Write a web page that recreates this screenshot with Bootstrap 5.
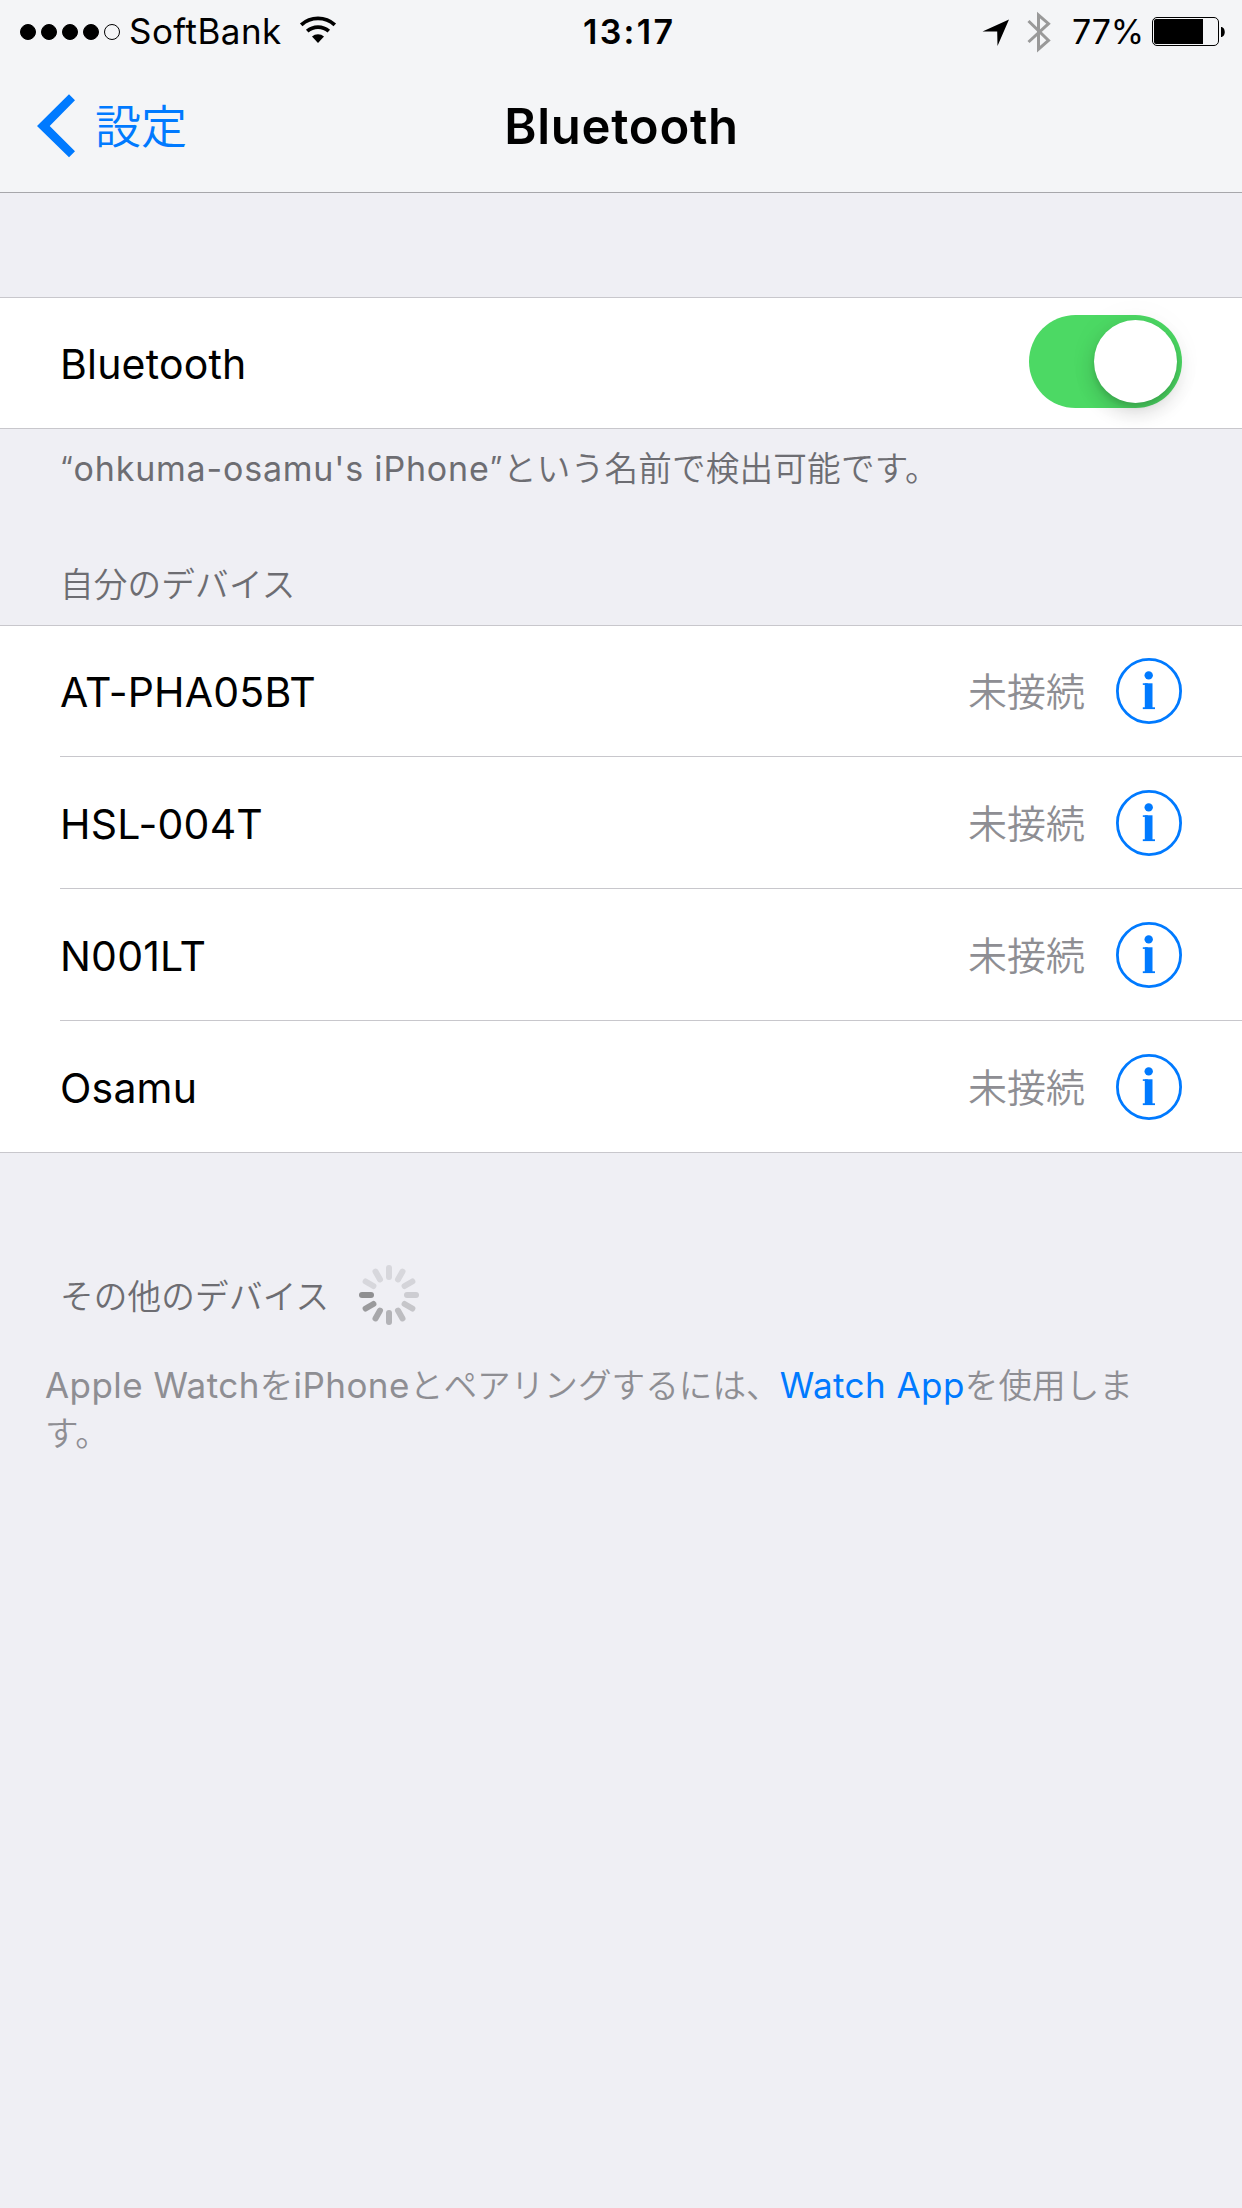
<!DOCTYPE html>
<html lang="ja">
<head>
<meta charset="utf-8">
<meta name="viewport" content="width=device-width, initial-scale=1">
<title>Bluetooth</title>
<link href="https://cdn.jsdelivr.net/npm/bootstrap@5.3.0/dist/css/bootstrap.min.css" rel="stylesheet">
<style>
:root{--ios-blue:#007aff;--ios-line:#c8c7cc;--ios-grey:#6d6d72;--ios-light:#8e8e93}
body{font-family:Inter,"Noto Sans CJK JP",sans-serif;background:#efeff4;color:#000;line-height:1;min-height:2208px}
svg{display:block;flex:none}
.jp{font-family:"Noto Sans CJK JP",sans-serif;font-weight:350}
.top-area{height:193px;background:#f4f5f7;border-bottom:1px solid #a7a7ab}
.status-bar{height:60px;padding:3px 17px 0 20px;font-size:34px}
.status-left{width:563px}
.carrier{font-size:35px;letter-spacing:.45px;margin-left:9px}
.wifi{margin:-3px 0 0 17px}
.signal-dots{gap:5px}
.signal-dots i{width:16px;height:16px;border:1px solid #000;border-radius:50%}
.signal-dots .on{background:#000}
.clock{font-weight:600;letter-spacing:2.3px}
.percent{letter-spacing:-.2px}
.title-bar{height:132px;padding:0 37px}
.side{flex:1 1 0}
.back-link{color:var(--ios-blue);text-decoration:none;padding-top:1px}
.back-link .jp{font-size:46px;margin:0 0 6px 20px}
.page-title{font-size:49px;font-weight:600;letter-spacing:.75px;margin:0 0 0 1px;line-height:1}
.ios-list{--bs-list-group-border-color:var(--ios-line);border:solid var(--ios-line);border-width:1px 0;border-radius:0;background:#fff}
.ios-list .list-group-item{border:0;background:none;color:#000;padding:0 0 0 60px;line-height:1}
.row-body{height:131px;padding:1px 60px 0 0;font-size:41px}
.list-group-item:not(:last-child) .row-body{border-bottom:1px solid var(--ios-line);height:132px}
.ios-list .list-group-item:first-child:not(:last-child) .row-body{height:131px;padding-top:0}
.row-label{padding-top:2px;letter-spacing:.2px}
.first-list{margin-top:104px}
.first-list .row-body{height:130px;padding-top:0}
.toggle{width:153px;height:93px;border-radius:47px;background:#4cd964;margin:0 0 3px;padding:5px;display:flex;justify-content:flex-end}
.toggle span{width:83px;height:83px;border-radius:50%;background:#fff;box-shadow:0 9px 20px rgba(0,0,0,.16),0 4px 5px rgba(0,0,0,.1),0 0 36px rgba(0,0,0,.04)}
.state{color:var(--ios-light);font-size:39px;padding-bottom:3px;margin-right:31px}
.note,.section-head{color:var(--ios-grey);padding-left:60px}
.note{height:80px;font-size:34px;letter-spacing:.8px;white-space:nowrap;padding-bottom:2px}
.quote{font-size:29px;vertical-align:4px;line-height:1}
.note .jp,.section-head .jp{font-size:33.6px;letter-spacing:.2px}
.head-mine{height:84px;margin-top:32px}
.head-other{height:60px;margin-top:112px;gap:30px}
.watch-note{color:var(--ios-light);font-size:35px;line-height:48px;letter-spacing:.45px;margin:36px 0 0;padding:0 92px 0 45px}
.watch-note .jp{font-size:33.6px;letter-spacing:.05px;line-height:1}
.watch-note a{color:var(--ios-blue);text-decoration:none}
</style>
</head>
<body>
<header class="top-area">
  <div class="status-bar d-flex align-items-center">
    <div class="status-left d-flex align-items-center">
      <div class="signal-dots d-flex"><i class="on"></i><i class="on"></i><i class="on"></i><i class="on"></i><i></i></div>
      <span class="carrier">SoftBank</span>
      <svg class="wifi" width="38" height="28" viewBox="0 0 38 28" fill="none" stroke="#000" stroke-width="3.8"><path d="M2.2 8.8a25 25 0 0 1 33.6 0M8.2 15.2a16.2 16.2 0 0 1 21.6 0"/><path d="M13 20.6a9 9 0 0 1 12 0L19 27z" fill="#000" stroke="none"/></svg>
    </div>
    <span class="clock">13:17</span>
    <div class="d-flex align-items-center ms-auto">
      <svg class="me-3" width="28" height="28" viewBox="0 0 28 28"><path d="M.5 13.5 27 1.5 15.5 28l-.3-14.5z"/></svg>
      <svg class="me-3" width="26" height="42" viewBox="0 0 26 42" fill="none" stroke="#999" stroke-width="3"><path d="M2.5 10 22.5 29.5 12.5 38.2V4l10 8.7L2.5 31"/></svg>
      <span class="percent ms-1">77%</span>
      <svg class="ms-2" width="73" height="29" viewBox="0 0 73 29"><rect x=".5" y=".5" width="66" height="28" rx="4.5" fill="none" stroke="#000"/><rect x="2" y="2" width="49" height="25" rx="2"/><path d="M51 2h-4v25h4zM69 10c5 0 5 10 0 10z"/></svg>
    </div>
  </div>
  <nav class="title-bar d-flex align-items-center">
    <div class="side">
      <a class="back-link d-inline-flex align-items-center" href="#">
        <svg width="38" height="64" viewBox="0 0 38 64" fill="#007aff"><path d="M0 32 32 .3l6 6L12.7 32 38 57.3l-6 6z"/></svg>
        <span class="jp">設定</span>
      </a>
    </div>
    <h1 class="page-title">Bluetooth</h1>
    <div class="side"></div>
  </nav>
</header>

<main>
  <ul class="list-group ios-list first-list">
    <li class="list-group-item"><div class="row-body d-flex align-items-center justify-content-between">
      <span class="row-label">Bluetooth</span>
      <label class="toggle"><span></span></label>
    </div></li>
  </ul>
  <div class="note d-flex align-items-center"><span><span class="quote">“</span>ohkuma-osamu's iPhone<span class="quote">”</span><span class="jp">という名前で検出可能です。</span></span></div>

  <div class="section-head head-mine d-flex align-items-center"><span class="jp">自分のデバイス</span></div>
  <ul class="list-group ios-list" id="devices"></ul>

  <div class="section-head head-other d-flex align-items-center">
    <span class="jp">その他のデバイス</span>
    <svg id="spin" width="60" height="60" viewBox="-30 -30 60 60" stroke-width="6" stroke-linecap="round"></svg>
  </div>
  <p class="watch-note">Apple Watch<span class="jp">を</span>iPhone<span class="jp">とペアリングするには、</span><a href="#">Watch App</a><span class="jp">を使用します。</span></p>
</main>
<script>
document.getElementById('devices').innerHTML=['AT-PHA05BT','HSL-004T','N001LT','Osamu'].map(n=>`
<li class="list-group-item"><div class="row-body d-flex align-items-center">
<span class="row-label me-auto">${n}</span><span class="state jp">未接続</span>
<svg width="66" height="66" viewBox="0 0 66 66" fill="#007aff"><circle cx="33" cy="33" r="31.6" fill="none" stroke="#007aff" stroke-width="2.8"/><circle cx="32.7" cy="17.4" r="4.2"/><rect x="28.8" y="25.3" width="7.7" height="25"/><rect x="26.8" y="25.3" width="5" height="1.6"/><rect x="26.8" y="49.3" width="12.2" height="1.8"/></svg>
</div></li>`).join('');
// Spoke colours, clockwise from twelve o'clock
document.getElementById('spin').innerHTML=['#d7d7dc','#d7d7dc','#d4d4d9','#cdcdd2','#c6c6ca','#bdbdc1','#b3b3b7','#a7a7aa','#9a9a9c','#8f8f91','#d7d7dc','#d7d7dc']
 .map((c,i)=>`<path d="M0-27V-18" stroke="${c}" transform="rotate(${i*30})"/>`).join('');
</script>
<script src="https://cdn.jsdelivr.net/npm/bootstrap@5.3.0/dist/js/bootstrap.bundle.min.js"></script>
</body>
</html>
